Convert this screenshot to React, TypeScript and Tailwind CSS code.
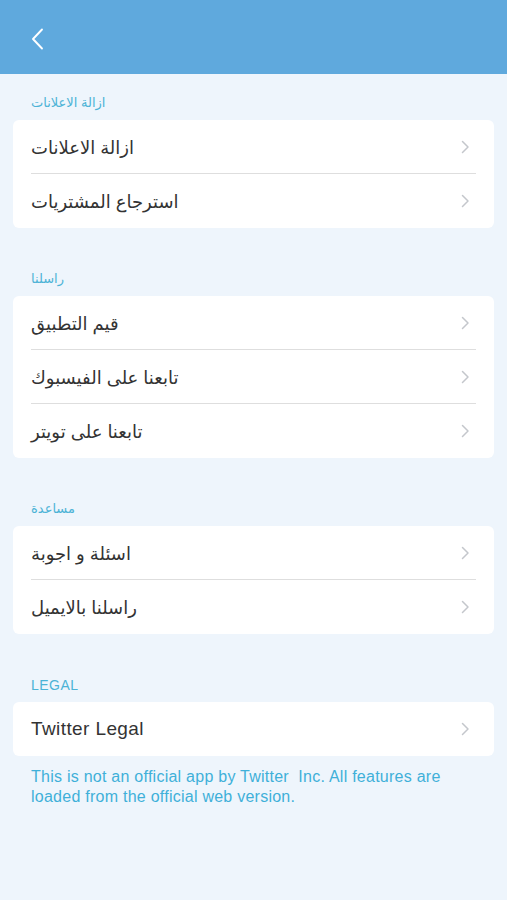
import React from 'react';

const font = { fontFamily: '"Liberation Sans", "DejaVu Sans", sans-serif' };

interface Section {
  title: string;
  latin?: boolean;
  items: string[];
}

const sections: Section[] = [
  { title: 'ازالة الاعلانات', items: ['ازالة الاعلانات', 'استرجاع المشتريات'] },
  { title: 'راسلنا', items: ['قيم التطبيق', 'تابعنا على الفيسبوك', 'تابعنا على تويتر'] },
  { title: 'مساعدة', items: ['اسئلة و اجوبة', 'راسلنا بالايميل'] },
  { title: 'LEGAL', latin: true, items: ['Twitter Legal'] },
];

const Chevron = () => (
  <svg width="10" height="14" viewBox="0 0 10 14" fill="none" className="mr-[6px] shrink-0">
    <path d="M2.5 1.5l5.5 5.5-5.5 5.5" stroke="#c4c7cc" strokeWidth="1.5" strokeLinecap="round" strokeLinejoin="round" />
  </svg>
);

const SettingsCard = ({ items, latin }: { items: string[]; latin?: boolean }) => (
  <div className="mx-[13px] rounded-[6px] bg-white">
    {items.map((item, i) => (
      <div key={item} className="px-[18px]">
        <div
          className={`flex h-[54px] items-center justify-between ${
            i < items.length - 1 ? 'border-b border-[#dedede]' : ''
          }`}
        >
          <span
            className={
              latin
                ? 'text-[19px] tracking-[0.4px] text-[#333333]'
                : 'pt-[3px] text-[18px] text-[#333333]'
            }
          >
            {item}
          </span>
          <Chevron />
        </div>
      </div>
    ))}
  </div>
);

export default function App() {
  return (
    <div className="min-h-[900px] w-[507px] bg-[#eef5fc]" style={font}>
      {/* Header */}
      <div className="flex h-[74px] items-center bg-[#5fa9dd] pl-[30px] pt-[4px]">
        <svg width="16" height="24" viewBox="0 0 16 24" fill="none">
          <path d="M12 2.5L3 12l9 9.5" stroke="#ffffff" strokeWidth="1.9" strokeLinecap="round" strokeLinejoin="round" />
        </svg>
      </div>

      {sections.map((section, idx) => (
        <div key={section.title}>
          <div
            className={`px-[31px] pb-[9px] leading-[16px] text-[#4cb3d6] ${
              idx === 0 ? 'pt-[21px]' : 'pt-[43px]'
            } ${section.latin ? 'text-[14px] tracking-[0.5px]' : 'text-[13px]'}`}
          >
            {section.title}
          </div>
          <SettingsCard items={section.items} latin={section.latin} />
        </div>
      ))}

      <p className="px-[31px] pt-[11px] text-[16px] leading-[20px] tracking-[0.25px] text-[#3fb0d9]">
        This is not an official app by Twitter &nbsp;Inc. All features are loaded from the official web version.
      </p>
    </div>
  );
}
